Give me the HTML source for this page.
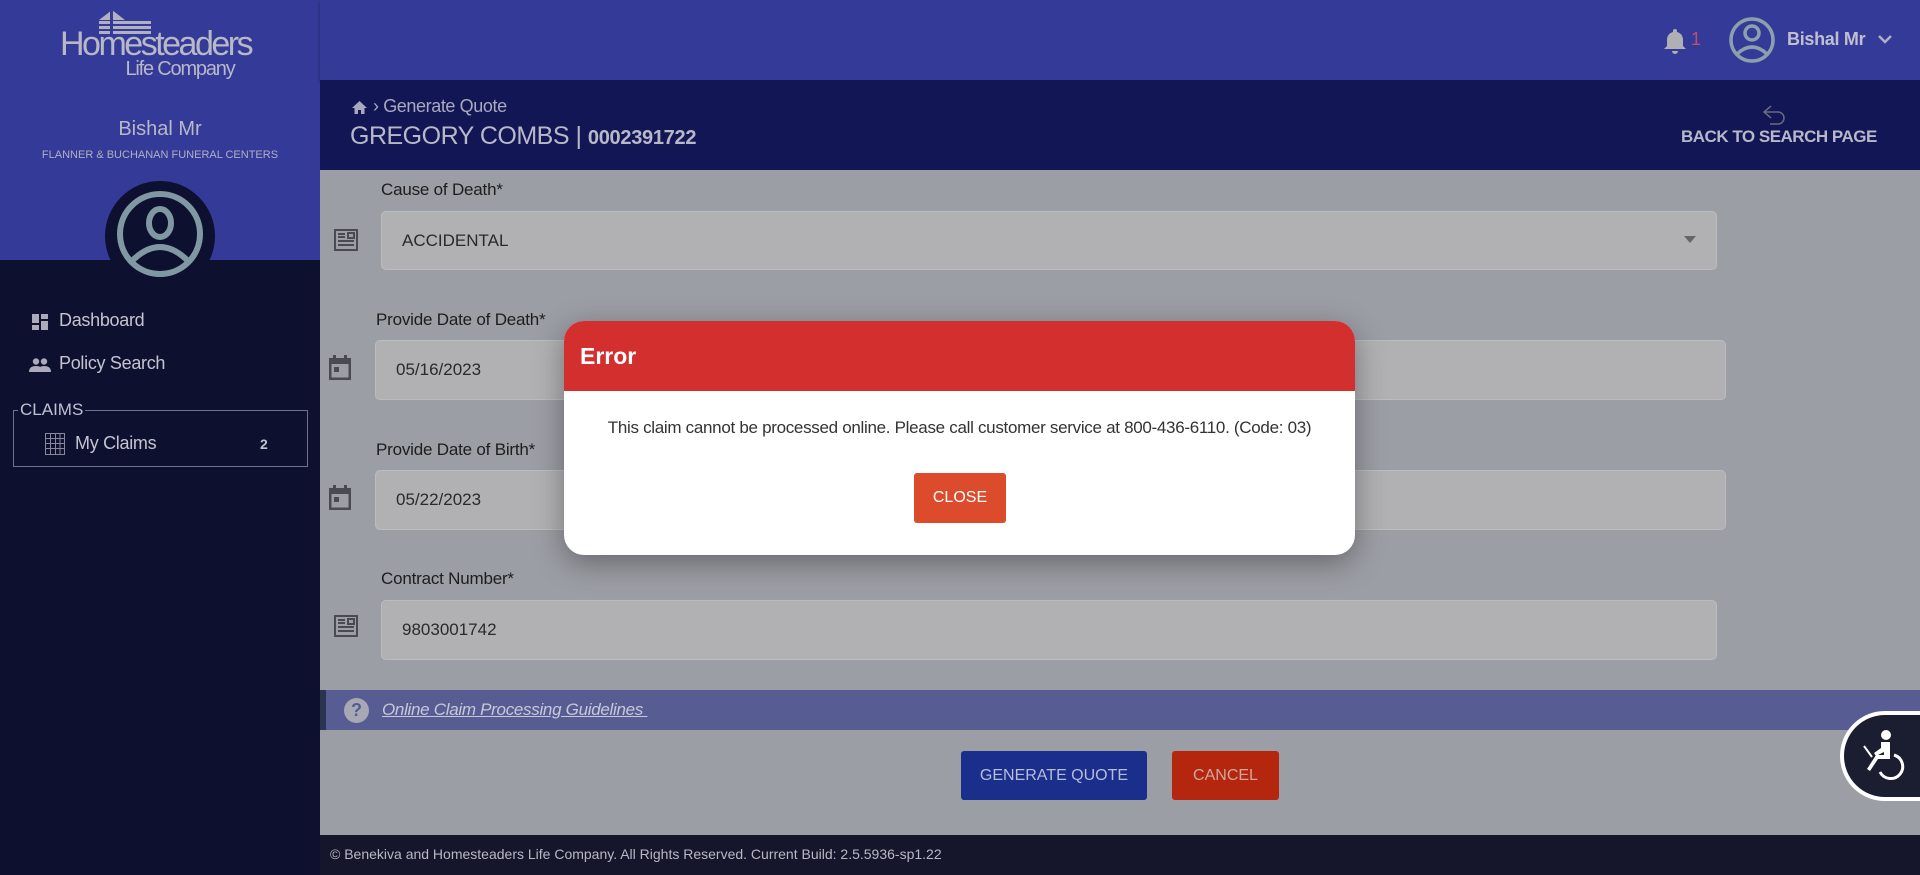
<!DOCTYPE html>
<html><head><meta charset="utf-8"><style>
*{box-sizing:border-box;margin:0;padding:0}
body{width:1920px;height:875px;overflow:hidden;font-family:"Liberation Sans",Arial,sans-serif;background:#9c9ea5;position:relative}
.abs{position:absolute}
.side-top{left:0;top:0;width:320px;height:260px;background:#343a98}
.side-bot{left:0;top:260px;width:320px;height:615px;background:#0e1030}
.topbar{left:320px;top:0;width:1600px;height:80px;background:#333a97;box-shadow:0 2px 3px rgba(0,0,0,.4)}
.sub{left:320px;top:80px;width:1600px;height:90px;background:#121654}
.lbl{font-size:17px;color:#1d1d1d;letter-spacing:-.2px}
.inp{background:#b1b1b3;border:1px solid #bcbcc0;border-radius:5px;font-size:17px;color:#2a2a2a;padding-left:20px;display:flex;align-items:center}
</style></head><body>
<div class="abs side-top"></div>
<div class="abs side-bot"></div>
<div class="abs topbar"></div>
<div class="abs sub"></div>

<svg class="abs" style="left:97px;top:8px" width="58" height="26" viewBox="0 0 58 26"><g fill="#b0b0c0"><polygon points="2,12 15,2 28,12"/><rect x="2" y="13" width="52" height="3"/><rect x="2" y="18" width="52" height="3"/><rect x="2" y="23" width="52" height="3"/><rect x="13" y="2" width="3" height="26" fill="#343a98"/></g></svg>
<div class="abs" style="left:60px;top:25px;width:190px;text-align:center;color:#b8b8c6;font-size:34px;letter-spacing:-2.5px">Homesteaders</div>
<div class="abs" style="left:120px;top:58px;width:120px;text-align:center;color:#b8b8c6;font-size:20px;letter-spacing:-1.2px">Life Company</div>
<div class="abs" style="left:0;top:118px;width:320px;text-align:center;color:#b8b8c6;font-size:20px">Bishal Mr</div>
<div class="abs" style="left:0;top:149px;width:320px;text-align:center;color:#b0b0c0;font-size:11px">FLANNER &amp; BUCHANAN FUNERAL CENTERS</div>
<div class="abs" style="left:105px;top:181px;width:110px;height:110px;border-radius:50%;background:#0e1030"></div>
<svg class="abs" style="left:116px;top:190px" width="88" height="88" viewBox="0 0 88 88"><g fill="none" stroke="#7f98a2" stroke-width="6"><circle cx="44" cy="44" r="40"/><ellipse cx="44" cy="33" rx="11" ry="14"/><path d="M15 72 Q44 42 73 72"/></g></svg>

<svg class="abs" style="left:32px;top:314px" width="16" height="16"><g fill="#aab"><rect x="0" y="0" width="7" height="9"/><rect x="9" y="0" width="7" height="5"/><rect x="0" y="11" width="7" height="5"/><rect x="9" y="7" width="7" height="9"/></g></svg>
<div class="abs" style="left:59px;top:310px;color:#c4c4d0;font-size:18px;letter-spacing:-.3px">Dashboard</div>
<svg class="abs" style="left:29px;top:358px" width="22" height="14"><g fill="#aab"><circle cx="7" cy="3.5" r="3.2"/><circle cx="15" cy="3.5" r="3.2"/><path d="M0 14 Q0 8 7 8 Q14 8 14 14Z"/><path d="M9 14 Q9 8 15 8 Q22 8 22 14Z"/></g></svg>
<div class="abs" style="left:59px;top:353px;color:#c4c4d0;font-size:18px;letter-spacing:-.3px">Policy Search</div>
<div class="abs" style="left:13px;top:410px;width:295px;height:57px;border:1px solid #707088"></div>
<div class="abs" style="left:18px;top:400px;background:#0e1030;color:#c0c0d0;font-size:17px;padding:0 2px">CLAIMS</div>
<svg class="abs" style="left:45px;top:433px" width="20" height="22"><g fill="none" stroke="#889" stroke-width="1"><rect x=".5" y=".5" width="19" height="21"/><path d="M.5 5.5H19.5M.5 10.5H19.5M.5 15.5H19.5M5.5 .5V21.5M10.5 .5V21.5M15 .5V21.5"/></g></svg>
<div class="abs" style="left:75px;top:433px;color:#c4c4d0;font-size:18px;letter-spacing:-.3px">My Claims</div>
<div class="abs" style="left:260px;top:436px;color:#c4c4d0;font-size:14px;font-weight:bold">2</div>

<svg class="abs" style="left:1664px;top:28px" width="22" height="26" viewBox="0 0 22 26"><path d="M11 1a2 2 0 0 1 2 2v1c4 1 6 4 6 8v6l3 3H0l3-3v-6c0-4 2-7 6-8V3a2 2 0 0 1 2-2zM8 23h6a3 3 0 0 1-6 0z" fill="#b0b0b4"/></svg>
<div class="abs" style="left:1691px;top:29px;color:#c0506a;font-size:18px">1</div>
<svg class="abs" style="left:1728px;top:16px" width="48" height="48" viewBox="0 0 48 48"><g fill="none" stroke="#8aa0ad" stroke-width="3.5"><circle cx="24" cy="24" r="21"/><circle cx="24" cy="17" r="7"/><path d="M9 38 Q24 24 39 38"/></g></svg>
<div class="abs" style="left:1787px;top:29px;color:#bfbfd0;font-size:18px;font-weight:bold;letter-spacing:-.3px">Bishal Mr</div>
<svg class="abs" style="left:1877px;top:34px" width="16" height="10"><path d="M2 2l6 6 6-6" fill="none" stroke="#b0b0c4" stroke-width="2.5"/></svg>

<svg class="abs" style="left:352px;top:101px" width="15" height="13"><path d="M7.5 0L15 7h-2.5v6h-3.5v-4h-3v4H2.5V7H0z" fill="#a9a9bd"/></svg>
<div class="abs" style="left:373px;top:96px;color:#a9a9bd;font-size:18px;letter-spacing:-.4px">› Generate Quote</div>
<div class="abs" style="left:350px;top:122px;color:#b8b8c8;font-size:25px;letter-spacing:-.5px">GREGORY COMBS | <b style="font-size:20px;letter-spacing:-.3px">0002391722</b></div>
<svg class="abs" style="left:1762px;top:104px" width="26" height="24" viewBox="0 0 26 24"><path d="M9 2L2 8l7 6M2 8h14a6 6 0 0 1 0 12H8" fill="none" stroke="#6a6a80" stroke-width="1.5"/></svg>
<div class="abs" style="left:1681px;top:127px;color:#b8b8c8;font-size:17px;font-weight:bold;letter-spacing:-.5px">BACK TO SEARCH PAGE</div>

<div class="abs lbl" style="left:381px;top:180px">Cause of Death*</div>
<svg class="abs" style="left:334px;top:228px" width="24" height="24" viewBox="0 0 24 24"><g fill="none" stroke="#4a4a52" stroke-width="2"><rect x="1" y="2" width="22" height="20"/><path d="M4 6h7M4 9h7M14 5h6v5h-6zM4 13h16M4 17h16"/></g></svg>
<div class="abs inp" style="left:381px;top:211px;width:1336px;height:59px">ACCIDENTAL</div>
<svg class="abs" style="left:1684px;top:236px" width="12" height="7"><path d="M0 0h12L6 7z" fill="#666"/></svg>

<div class="abs lbl" style="left:376px;top:310px">Provide Date of Death*</div>
<svg class="abs" style="left:329px;top:355px" width="22" height="25" viewBox="0 0 22 25"><g fill="#4a4a52"><rect x="4" y="0" width="3" height="4"/><rect x="15" y="0" width="3" height="4"/><path d="M0 3h22v22H0zM2.5 9v13.5h17V9z"/><rect x="5" y="12" width="5" height="5"/></g></svg>
<div class="abs inp" style="left:375px;top:340px;width:1351px;height:60px">05/16/2023</div>

<div class="abs lbl" style="left:376px;top:440px">Provide Date of Birth*</div>
<svg class="abs" style="left:329px;top:485px" width="22" height="25" viewBox="0 0 22 25"><g fill="#4a4a52"><rect x="4" y="0" width="3" height="4"/><rect x="15" y="0" width="3" height="4"/><path d="M0 3h22v22H0zM2.5 9v13.5h17V9z"/><rect x="5" y="12" width="5" height="5"/></g></svg>
<div class="abs inp" style="left:375px;top:470px;width:1351px;height:60px">05/22/2023</div>

<div class="abs lbl" style="left:381px;top:569px">Contract Number*</div>
<svg class="abs" style="left:334px;top:614px" width="24" height="24" viewBox="0 0 24 24"><g fill="none" stroke="#4a4a52" stroke-width="2"><rect x="1" y="2" width="22" height="20"/><path d="M4 6h7M4 9h7M14 5h6v5h-6zM4 13h16M4 17h16"/></g></svg>
<div class="abs inp" style="left:381px;top:600px;width:1336px;height:60px">9803001742</div>

<div class="abs" style="left:320px;top:690px;width:1600px;height:40px;background:#575d92;border-left:6px solid #2a3350"></div>
<div class="abs" style="left:344px;top:698px;width:25px;height:25px;border-radius:50%;background:#a8a8b4;color:#575d92;font-weight:bold;font-size:18px;text-align:center;line-height:25px">?</div>
<div class="abs" style="left:382px;top:700px;color:#c8c8d8;font-size:17px;font-style:italic;text-decoration:underline;letter-spacing:-.3px">Online Claim Processing Guidelines&nbsp;</div>

<div class="abs" style="left:961px;top:751px;width:186px;height:49px;background:#1a2f8c;border-radius:3px;color:#b8bcd8;font-size:16px;text-align:center;line-height:49px">GENERATE QUOTE</div>
<div class="abs" style="left:1172px;top:751px;width:107px;height:49px;background:#b4260e;border-radius:3px;color:#d0a8a0;font-size:16px;text-align:center;line-height:49px">CANCEL</div>

<div class="abs" style="left:1840px;top:711px;width:100px;height:90px;border-radius:45px 0 0 45px;background:#1b1d30;border:4px solid #fff"></div>
<svg class="abs" style="left:1862px;top:728px" width="44" height="56" viewBox="0 0 44 56"><g fill="#fff"><circle cx="24" cy="7" r="5"/><path d="M19 14h9v17h-12l-8 12-3-2 9-14h8V24l-8 4-2-3 7-5z"/><path d="M2 18l8 11" stroke="#fff" stroke-width="2" fill="none"/></g><path d="M32 27a12 12 0 1 1-14 17" fill="none" stroke="#fff" stroke-width="3"/></svg>

<div class="abs" style="left:320px;top:835px;width:1600px;height:40px;background:#15162b"></div>
<div class="abs" style="left:330px;top:846px;color:#b8b8c4;font-size:14px">© Benekiva and Homesteaders Life Company. All Rights Reserved. Current Build: 2.5.5936-sp1.22</div>

<div class="abs" style="left:564px;top:321px;width:791px;height:234px;background:#fff;border-radius:20px;overflow:hidden;box-shadow:0 8px 30px rgba(0,0,0,.35)">
<div style="height:70px;background:#d32f2f;color:#fff;font-size:23px;font-weight:bold;padding:22px 0 0 16px">Error</div>
<div style="text-align:center;font-size:17px;color:#333;margin-top:27px;letter-spacing:-.3px">This claim cannot be processed online. Please call customer service at 800-436-6110. (Code: 03)</div>
<div style="position:absolute;left:350px;top:152px;width:92px;height:50px;background:#dc4b2c;border-radius:3px;color:#fff;font-size:16px;text-align:center;line-height:50px">CLOSE</div>
</div>
</body></html>
